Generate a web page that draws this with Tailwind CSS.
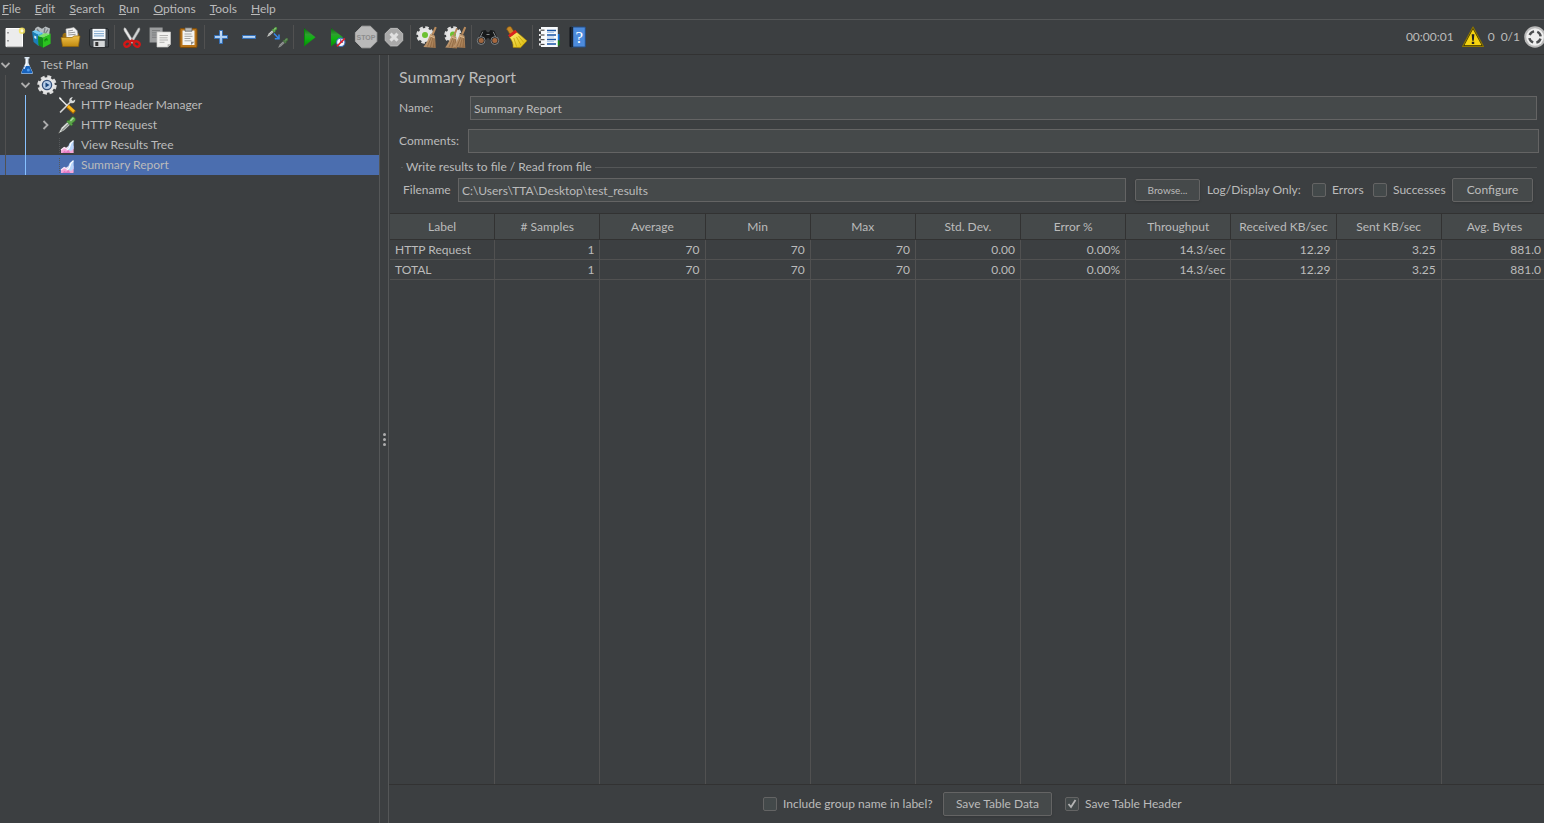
<!DOCTYPE html>
<html lang="en">
<head>
    <meta charset="UTF-8">
    <meta name="viewport" content="width=device-width, initial-scale=1.0">
    <title>Summary Report - Test Plan</title>
    <script src="https://cdn.jsdelivr.net/npm/@tailwindcss/browser@4"></script>
</head>
<body class="flex h-screen flex-col overflow-hidden bg-[#3c3f41] font-['Lato','Open_Sans',sans-serif] text-[12px] leading-4 text-[#bbbbbb]">

    <!-- Shared shapes -->
    <svg class="h-0 w-0 shrink-0" aria-hidden="true">
        <defs>
            <linearGradient id="blue" x1="0" y1="0" x2="0" y2="1"><stop offset="0" stop-color="#d2e4f8"/><stop offset="1" stop-color="#8fbcec"/></linearGradient>
            <linearGradient id="green" x1="0" y1="0" x2="0" y2="1"><stop offset="0" stop-color="#0b6a0e"/><stop offset=".35" stop-color="#2f9e30"/><stop offset=".55" stop-color="#0fb512"/><stop offset="1" stop-color="#078a08"/></linearGradient>
            <linearGradient id="gold" x1="0" y1="0" x2="0" y2="1"><stop offset="0" stop-color="#f0c14a"/><stop offset="1" stop-color="#c08a10"/></linearGradient>
            <linearGradient id="straw" x1="0" y1="0" x2="1" y2="1"><stop offset="0" stop-color="#d9b48a"/><stop offset="1" stop-color="#9a7048"/></linearGradient>
            <linearGradient id="yellow" x1="0" y1="0" x2="1" y2="1"><stop offset="0" stop-color="#fff27a"/><stop offset="1" stop-color="#d9b400"/></linearGradient>
            <symbol id="gear" viewBox="0 0 20 20">
                <circle cx="10" cy="10" r="8.3" fill="none" stroke="#dedede" stroke-width="2.8" stroke-dasharray="3.9 2.62"/>
                <circle cx="10" cy="10" r="7.8" fill="#e6e6e6"/>
            </symbol>
            <symbol id="broom" viewBox="0 0 14 22">
                <path d="M12.8 .5 9.6 8" stroke="#b88a5c" stroke-width="2"/>
                <path d="M7.5 7.2 12 9.2 12.8 21.5 .4 20.4C3.2 17 5.6 12 7.5 7.2z" fill="url(#straw)"/>
                <path d="M8.6 10 4.4 20M10 10.5 7.4 20.6M11.2 11 10.5 21" stroke="#86603a" stroke-width=".7"/>
                <path d="M7 9.4 11.8 11.4" stroke="#e0bd92" stroke-width="1"/>
            </symbol>
            <symbol id="dropper" viewBox="0 0 20 20">
                <path d="M1.2 18.8 4.4 12.6 10.6 6.8 13.4 9.4 7 15.6z" fill="#dfe3df" stroke="#3a3c3a" stroke-width=".6"/>
                <path d="M4.6 15.8 11.8 8.8" stroke="#8e938e" stroke-width="1.3"/>
                <path d="M9.6 6.4 11 5 12 5.7 14.4 2.6C16.2.2 20 3.6 18 6L15 8.4l.9 1-1.6 1.6z" fill="#5aa548" stroke="#2f6a25" stroke-width=".6"/>
                <path d="m13.4 6 3-3.2" stroke="#a8d69a" stroke-width="1.6"/>
            </symbol>
            <symbol id="chart" viewBox="0 0 20 20">
                <path d="M2.5 3v14.5H18" fill="none" stroke="#56595b" stroke-dasharray="1 1"/>
                <path d="M4 18V14.8l3.4-2.3 2 .8 2.4-2.2 4.8-.4V18z" fill="#f3a6d8"/>
                <path d="M4 15 7.2 12.6l2.2 1 2.4-2.2" fill="none" stroke="#fbe6f5" stroke-width="1.3"/>
                <path d="M10 14.2 12.6 8 16.6 5.2v8.6L14 16z" fill="#b7d4fa"/>
                <path d="M9.6 14.6c3.2.4 2.9-3.4 4.2-6.2l2.6-2.8" fill="none" stroke="#fff" stroke-width="1.2"/>
                <path d="m5.5 18 2-2.2 1.5 1.3 2.4-2 2 2.9" fill="#e27ac2"/>
            </symbol>
        </defs>
    </svg>

    <!-- Menu bar -->
    <nav class="flex h-5 shrink-0 items-center gap-3.5 border-b border-[#555758] px-0.5 pb-px">
        <a href="#"><u>F</u>ile</a>
        <a href="#"><u>E</u>dit</a>
        <a href="#"><u>S</u>earch</a>
        <a href="#"><u>R</u>un</a>
        <a href="#"><u>O</u>ptions</a>
        <a href="#"><u>T</u>ools</a>
        <a href="#"><u>H</u>elp</a>
    </nav>

    <!-- Toolbar -->
    <header class="flex h-[35px] shrink-0 items-center border-b border-[#323232]">
        <button class="grid h-7 w-7 place-items-center" aria-label="New">
            <svg class="size-6" viewBox="0 0 24 24"><path d="M4 3.5h16.5v18H4z" fill="#ececec" stroke="#fff"/><path d="M4.5 21.8h16" stroke="#a5a5a5"/><path d="M6 7v1.4M6 15v1.4" stroke="#777" stroke-width="1.4"/><circle cx="20" cy="5.8" r="3.2" fill="#f5e45c" opacity=".85"/><circle cx="20" cy="5.8" r="1.5" fill="#fffce0"/></svg>
        </button>
        <button class="grid h-7 w-7 place-items-center" aria-label="Templates">
            <svg class="size-6" viewBox="0 0 24 24"><path d="m4 7 1.5-4L8 1.6l4 2.2 3.5-2.2L20 3.5 19 10l-8 3-5-3z" fill="#b7bdc0"/><path d="m7 4 3 4M15 3l-1 5M18 4.5 15 9" stroke="#777f83" stroke-width="1.3"/><path d="m2 6.5 6.5 3v11.5L3.6 17z" fill="#1a7fb8"/><path d="m8.5 9.5 4-2v11l-4 2z" fill="#39aee8"/><path d="m2 6.5 3-1.2L12 7.5l-3.5 2z" fill="#70cbf4"/><path d="m4.3 10.5 2 1v2.6l-2-1.2z" fill="#d8effa"/><path d="m8 11 5 1.5v10.3L8.4 20z" fill="#138a1a"/><path d="m13 12.5 7.6-3.7v10L13 22.8z" fill="#2bc420"/><path d="m8 11 6.6-2.8 6 .6L13 12.5z" fill="#7de36a"/><path d="M15 16.5v-2l2-.8v2" fill="none" stroke="#0b6f10"/></svg>
        </button>
        <button class="grid h-7 w-7 place-items-center" aria-label="Open">
            <svg class="size-6" viewBox="0 0 24 24"><path d="M4.5 10 6 8h3l11.8.5V18L5 21z" fill="#9b6e10"/><path d="m8 4 8-1.4 3.2 3.2.8 7H8.6z" fill="#f5f5f5" stroke="#bbb" stroke-width=".6"/><path d="m10 6 5-.8M10 8l7.2-.8M10.2 10l7.5-.7" stroke="#999"/><path d="M3 12.5h11l2-1.6h6L20.4 21.5H4.6z" fill="url(#gold)" stroke="#98690a" stroke-width=".7"/></svg>
        </button>
        <button class="grid h-7 w-7 place-items-center" aria-label="Save">
            <svg class="size-6" viewBox="0 0 24 24"><path d="M5 3.5h16.5l1 1.5v17H4.6L3.5 20V4.5z" fill="#444a4f" stroke="#23272a"/><path d="M6.5 3.8h13V14h-13z" fill="#f7fafc"/><path d="M8 6.3h10M8 8.6h10M8 10.9h10" stroke="#8ab0d2" stroke-width="1.1"/><path d="M7.5 15.8h11.3V22H7.5z" fill="#d4d7d9"/><path d="M9.3 17h3v4h-3z" fill="#333"/></svg>
        </button>
        <div class="mx-0.5 h-6 w-px bg-[#515151]"></div>
        <button class="ml-px grid h-7 w-7 place-items-center" aria-label="Cut">
            <svg class="size-6" viewBox="0 0 24 24"><path d="M4 3.2c1-1 2 .3 2.6 1.6L14 17l-2 1.4L5.2 7.5C4.3 6 3.4 4.5 4 3.2z" fill="#e8e8e8" stroke="#999" stroke-width=".5"/><path d="M19.8 3.2c-1-1-2 .3-2.6 1.6L10 17l2 1.4 6.6-10.9c.9-1.5 1.8-3 1.2-4.3z" fill="#d0d3d4" stroke="#888" stroke-width=".5"/><g fill="none" stroke="#d31717" stroke-width="2.3"><ellipse cx="7.2" cy="19" rx="3" ry="2.4" transform="rotate(-35 7.2 19)"/><ellipse cx="16.8" cy="19" rx="3" ry="2.4" transform="rotate(35 16.8 19)"/><path d="m9.4 16.8 2.6-1.2 2.7 1.2"/></g></svg>
        </button>
        <button class="grid h-7 w-7 place-items-center" aria-label="Copy">
            <svg class="size-6" viewBox="0 0 24 24"><path d="M1.6 2.5h13v15h-13z" fill="#9b9d9e"/><path d="M4 5.5h8M4 7.8h8M4 10h5M4 12.3h5" stroke="#7d7f80"/><path d="M9 7h13.5v12.4L19.8 22H9z" fill="#f1f1ef" stroke="#c9c9c7" stroke-width=".7"/><path d="M11.5 10.5h8.5M11.5 12.8h8M11.5 15h8.5M11.5 17.3h5" stroke="#b2b2b0"/><path d="M19.6 22v-2.7h2.9z" fill="#a7a7a4"/></svg>
        </button>
        <button class="grid h-7 w-7 place-items-center" aria-label="Paste">
            <svg class="size-6" viewBox="0 0 24 24"><rect x="4" y="3.5" width="17" height="19" rx="1.3" fill="#b8741a" stroke="#7d4b08"/><path d="M6.5 5.5h12V20h-12z" fill="#f4f4f2"/><path d="M9 2.8h7v3.4H9z" fill="#b7b9b8" stroke="#555" stroke-width=".7"/><path d="M8.5 9h7M8.5 11.3h8M8.5 13.5h6M8.5 15.8h7" stroke="#a4a4a2"/><path d="M15 20v-3.3h3.5z" fill="#8d8d8b"/></svg>
        </button>
        <div class="mx-0.5 h-6 w-px bg-[#515151]"></div>
        <button class="grid h-7 w-7 place-items-center" aria-label="Expand all">
            <svg class="size-6" viewBox="0 0 24 24"><path d="M10.5 5.5h3v5h5v3h-5v5h-3v-5h-5v-3h5z" fill="url(#blue)" stroke="#3470b8"/></svg>
        </button>
        <button class="grid h-7 w-7 place-items-center" aria-label="Collapse all">
            <svg class="size-6" viewBox="0 0 24 24"><path d="M5.5 10.5h13v3h-13z" fill="url(#blue)" stroke="#3470b8"/></svg>
        </button>
        <button class="grid h-7 w-7 place-items-center" aria-label="Toggle">
            <svg class="size-6" viewBox="0 0 24 24"><use href="#dropper" x="1" y="1" width="12" height="12"/><g opacity=".6"><use href="#dropper" x="12" y="12" width="12" height="12"/></g><path d="m9 8.5 4.5 4.8M14 9.5v4.3H9.8" fill="none" stroke="#3688e8" stroke-width="1.5"/></svg>
        </button>
        <div class="mx-0.5 h-6 w-px bg-[#515151]"></div>
        <button class="grid h-7 w-7 place-items-center" aria-label="Start">
            <svg class="size-6" viewBox="0 0 24 24"><path d="M6 3 17.5 12.2 6 21.5z" fill="url(#green)"/><path d="M6.5 4.5v16" stroke="#0a8a0c"/></svg>
        </button>
        <button class="grid h-7 w-7 place-items-center" aria-label="Start no pauses">
            <svg class="size-6" viewBox="0 0 24 24"><path d="M5 3 17 12.2 5 21.5z" fill="url(#green)"/><circle cx="14.8" cy="17.3" r="4.2" fill="#f5f5ff" stroke="#3c72b8" stroke-width="1.1"/><path d="m14.8 14.2v3h2.2" fill="none" stroke="#3b3b90"/><path d="m10.9 21.4 8-8" stroke="#e0202a" stroke-width="1.5"/></svg>
        </button>
        <button class="grid h-7 w-7 place-items-center" aria-label="Stop">
            <svg class="size-6" viewBox="0 0 24 24"><path d="M7.8 1.2h8.6l6.4 6.4v8.8l-6.4 6.4H7.8l-6.4-6.4V7.6z" fill="#b9b9b9" stroke="#a9a9a9"/><text x="12" y="14.8" text-anchor="middle" font-family="Liberation Sans" font-size="7" font-weight="bold" fill="#8c8c8c">STOP</text></svg>
        </button>
        <button class="grid h-7 w-7 place-items-center" aria-label="Shutdown">
            <svg class="size-6" viewBox="0 0 24 24"><path d="M8.5 3.4h7l5.2 5.2v7L15.5 20.9h-7l-5.3-5.3v-7z" fill="#a9a9a9" stroke="#bcbcbc"/><path d="m8.5 8.6 7 7m0-7-7 7" stroke="#e0e0e0" stroke-width="3"/></svg>
        </button>
        <div class="mx-0.5 h-6 w-px bg-[#515151]"></div>
        <button class="grid h-7 w-7 place-items-center" aria-label="Clear">
            <svg class="size-6" viewBox="0 0 24 24"><use href="#gear" x="1" y="1" width="18" height="18"/><circle cx="10" cy="10" r="3" fill="#6cc132"/><use href="#broom" x="8" y="1.5" width="14" height="22"/></svg>
        </button>
        <button class="grid h-7 w-7 place-items-center" aria-label="Clear all">
            <svg class="size-6" viewBox="0 0 24 24"><use href="#gear" x="1" y="1" width="18" height="18"/><circle cx="10" cy="9.5" r="3" fill="#6cc132"/><use href="#broom" x="1.5" y="3" width="14" height="21"/><use href="#broom" x="9.5" y="1.5" width="14" height="22"/></svg>
        </button>
        <div class="mx-0.5 h-6 w-px bg-[#515151]"></div>
        <button class="grid h-7 w-7 place-items-center" aria-label="Search">
            <svg class="size-6" viewBox="0 0 24 24"><path d="M5.7 5.8 9.5 4.9l1.6 2.4h1.8l1.6-2.4 3.8.9 4.4 9.7-7 3.8-2.6-6h-2.2l-2.6 6-7-3.8z" fill="#17191a"/><circle cx="5.2" cy="15.6" r="3.9" fill="#2a2c2d" stroke="#808487"/><circle cx="18.8" cy="15.6" r="3.9" fill="#2a2c2d" stroke="#808487"/><circle cx="5.2" cy="15.6" r="2.5" fill="#a0663f"/><circle cx="18.8" cy="15.6" r="2.5" fill="#a8683e"/><path d="m6.8 6.8-2.5 5M17.2 6.8l2.5 5M10.5 9.5h3" stroke="#85898b"/></svg>
        </button>
        <button class="grid h-7 w-7 place-items-center" aria-label="Reset search">
            <svg class="size-6" viewBox="0 0 24 24"><path d="M2.8 4.2c0-2.2 3.4-3.6 4.6-1.8L10.2 7 6 9.4z" fill="#c68a28" stroke="#83510b" stroke-width=".7"/><path d="m5.5 12.2 7-5.2 4 3.2 6.5 5.6-6.5 7-7.500-.4c.5-3.400-.9-6.900-3.500-10.200z" fill="url(#yellow)" stroke="#a27e00" stroke-width=".6"/><path d="m5 11.4 7.2-5.4" stroke="#da231e" stroke-width="3"/><path d="m9.8 13 2.8 8.5M12.5 12l4.3 8M14.5 11l5.3 6.5" stroke="#c4a306" stroke-width=".8"/></svg>
        </button>
        <div class="mx-0.5 h-6 w-px bg-[#515151]"></div>
        <button class="grid h-7 w-7 place-items-center" aria-label="Function helper">
            <svg class="size-6" viewBox="0 0 24 24"><path d="M19 9h3.5v6.5H19z" fill="#1b78da"/><path d="M19 15.5h3.5v5H19z" fill="#178b18"/><path d="M4 2h16.8v20H4z" fill="#f8fafc"/><path d="M10 5.5h9M10 10h9M10 14.5h9M10 19h9" stroke="#1653a4" stroke-width="1.4"/><path d="M10 7.5h7M10 12h7M10 16.6h7" stroke="#aac7ea"/><path d="M2 5.2h5M2 10h5M2 14.7h5M2 19.4h5" stroke="#f2f2f2" stroke-width="2.2"/><path d="M3.5 5.2h4M3.5 10h4M3.5 14.7h4M3.5 19.4h4" stroke="#333"/></svg>
        </button>
        <button class="grid h-7 w-7 place-items-center" aria-label="Help">
            <svg class="size-6" viewBox="0 0 24 24"><path d="m4.5 2.4 2-1V22.4l-2-1z" fill="#11151b"/><path d="M6.5 2h13.8v20H6.5z" fill="#4c8bdc" stroke="#244e85"/><path d="M6 2h2.2v20H6z" fill="#1d2733"/><text x="14.3" y="18" text-anchor="middle" font-family="Liberation Serif" font-size="17" fill="#fff">?</text></svg>
        </button>
        <div class="-mr-0.5 ml-auto flex items-center">
            <span>00:00:01</span>
            <button class="ml-2" aria-label="Warnings">
                <svg class="size-[22px]" viewBox="0 0 20 20"><path d="M10 1 19.5 18.6H.5z" fill="#2c2800" stroke="#8e7600" stroke-linejoin="round"/><path d="M10 3 17.8 17.6H2.2z" fill="#f6d410"/><path d="M8.8 7.5h2.4l-.5 6H9.3zM8.9 14.4h2.2v2H8.9z" fill="#222"/></svg>
            </button>
            <span class="ml-1">0</span>
            <span class="ml-1.5">0/1</span>
            <svg class="ml-1 size-[22px]" viewBox="0 0 20 20"><circle cx="10" cy="10" r="9.8" fill="#b9b9b9"/><circle cx="10" cy="10" r="8" fill="#eee"/><circle cx="10" cy="10" r="5.2" fill="none" stroke="#4b4d4f" stroke-width="2.2" stroke-dasharray="5.17 3" stroke-dashoffset="-1.5"/></svg>
        </div>
    </header>

    <main class="flex min-h-0 flex-1">
        <!-- Test plan tree -->
        <aside class="w-[379px] shrink-0">
            <ul role="tree">
                <li class="flex h-5 items-center">
                    <svg class="size-2.5" viewBox="0 0 10 10"><path d="m1.5 3 4 4 4-4" fill="none" stroke="#adadad" stroke-width="1.8"/></svg>
                    <svg class="ml-[7px] size-5" viewBox="0 0 20 20"><path d="M7.5 2h5v1.5h-1V8l4.2 9.2c.3 1-.2 1.8-1.2 1.8h-9c-1 0-1.5-.8-1.2-1.8L8.5 8V3.5h-1z" fill="#d9e6f1"/><path d="M7.4 11h5.2l2.8 6.3c.2.7-.1 1.1-.8 1.1H5.4c-.7 0-1-.4-.8-1.1z" fill="#1763bd"/><path d="M9.3 4v5L7 14" fill="none" stroke="#fff"/><circle cx="11.3" cy="15" r="1.5" fill="#4f9cf0"/></svg>
                    <span class="ml-1">Test Plan</span>
                </li>
                <li class="flex h-5 items-center">
                    <span class="ml-[5px] h-full w-px bg-[#515151]"></span>
                    <svg class="ml-3.5 size-2.5" viewBox="0 0 10 10"><path d="m1.5 3 4 4 4-4" fill="none" stroke="#adadad" stroke-width="1.8"/></svg>
                    <svg class="ml-[7px] size-5" viewBox="0 0 20 20"><use href="#gear" width="20" height="20"/><circle cx="10" cy="10" r="4.6" fill="#b7cde8" stroke="#33507c" stroke-width="1.3"/><path d="m8.5 7.5 4 2.5-4 2.5z" fill="#19467f"/></svg>
                    <span class="ml-1">Thread Group</span>
                </li>
                <li class="flex h-5 items-center">
                    <span class="ml-[5px] h-full w-px bg-[#515151]"></span>
                    <span class="ml-[19px] h-full w-px bg-[#87c1ff]"></span>
                    <svg class="ml-[31px] size-5" viewBox="0 0 20 20"><path d="m3 17.5 11-11" stroke="#222" stroke-width="3"/><path d="m3 17.5 11-11" stroke="#c6c8c8" stroke-width="1.8"/><path d="M12.5 6.8c-1-2.5.8-5 3.4-4.6L14.3 4.4l1.5 1.5 2.4-1.4c.3 2.7-2 4.5-4.5 3.5z" fill="#d8dada"/><path d="m2.5 3 8 8" stroke="#e5e5e5" stroke-width="1.6"/><path d="m2 1.8 2.6 1.7-1.3 1.3z" fill="#fff"/><path d="m10.5 11 7 6.5" stroke="#ab6900" stroke-width="4"/><path d="m11 11 6 5.5" stroke="#f8b71c" stroke-width="2.6"/></svg>
                    <span class="ml-1">HTTP Header Manager</span>
                </li>
                <li class="flex h-5 items-center">
                    <span class="ml-[5px] h-full w-px bg-[#515151]"></span>
                    <span class="ml-[19px] h-full w-px bg-[#87c1ff]"></span>
                    <svg class="ml-3.5 size-2.5" viewBox="0 0 10 10"><path d="m3.5 1 4 4-4 4" fill="none" stroke="#adadad" stroke-width="1.8"/></svg>
                    <svg class="ml-[7px] size-5"><use href="#dropper" width="20" height="20"/></svg>
                    <span class="ml-1">HTTP Request</span>
                </li>
                <li class="flex h-5 items-center">
                    <span class="ml-[5px] h-full w-px bg-[#515151]"></span>
                    <span class="ml-[19px] h-full w-px bg-[#87c1ff]"></span>
                    <svg class="ml-[31px] size-5"><use href="#chart" width="20" height="20"/></svg>
                    <span class="ml-1">View Results Tree</span>
                </li>
                <li class="flex h-5 items-center bg-[#4b6eaf]" aria-selected="true">
                    <span class="ml-[5px] h-full w-px bg-[#515151]"></span>
                    <span class="ml-[19px] h-full w-px bg-[#87c1ff]"></span>
                    <svg class="ml-[31px] size-5"><use href="#chart" width="20" height="20"/></svg>
                    <span class="ml-1">Summary Report</span>
                </li>
            </ul>
        </aside>

        <!-- Split pane divider -->
        <div class="flex w-2.5 shrink-0 flex-col items-center justify-center gap-0.5 border-x border-[#555758]">
            <span class="size-[3px] rounded-full bg-[#adadad]"></span>
            <span class="size-[3px] rounded-full bg-[#adadad]"></span>
            <span class="size-[3px] rounded-full bg-[#adadad]"></span>
        </div>

        <section class="flex min-w-0 flex-1 flex-col">
            <form class="shrink-0 pl-2.5">
                <h1 class="pt-3 text-[16px] leading-5">Summary Report</h1>
                <div class="mt-[9px] flex items-center pr-[7px]">
                    <label for="name" class="w-[71px]">Name:</label>
                    <input id="name" type="text" value="Summary Report" class="h-6 min-w-0 flex-1 border border-[#646464] bg-[#45494a] px-[3px]">
                </div>
                <div class="mt-[9px] flex items-center pr-[5px]">
                    <label for="comments" class="w-[69px]">Comments:</label>
                    <input id="comments" type="text" class="h-6 min-w-0 flex-1 border border-[#646464] bg-[#45494a] px-[3px]">
                </div>
                <fieldset class="mr-[7px]">
                    <div class="flex items-center gap-[3px] pt-1.5">
                        <span class="ml-0.5 h-px w-0.5 bg-[#555758]"></span>
                        <span>Write results to file / Read from file</span>
                        <span class="h-px flex-1 bg-[#555758]"></span>
                    </div>
                    <div class="flex items-center pt-[3px]">
                        <label for="filename" class="ml-1 w-[55px]">Filename</label>
                        <input id="filename" type="text" value="C:\Users\TTA\Desktop\test_results" class="h-6 min-w-0 flex-1 border border-[#646464] bg-[#45494a] px-[3px]">
                        <button type="button" class="ml-[9px] h-[22px] w-[65px] rounded-xs border border-[#646464] bg-[#45494a] text-[10px] leading-3 shadow-sm">Browse...</button>
                        <span class="ml-[7px] w-[105px] whitespace-nowrap">Log/Display Only:</span>
                        <label class="flex w-[61px] items-center gap-1.5"><input type="checkbox" class="size-3.5 appearance-none rounded-xs border border-[#646464] bg-[#43494a]">Errors</label>
                        <label class="flex w-[79px] items-center gap-1.5"><input type="checkbox" class="size-3.5 appearance-none rounded-xs border border-[#646464] bg-[#43494a]">Successes</label>
                        <button type="button" class="mr-1 h-6 w-[81px] rounded-xs border border-[#646464] bg-[#45494a] shadow-sm">Configure</button>
                    </div>
                </fieldset>
            </form>

            <!-- Results table; the last row carries the column lines down to the footer -->
            <div class="mt-[11px] min-h-0 flex-1 overflow-hidden border-b border-[#323232] pl-px">
                <table class="h-full w-[calc(100%+3px)] table-fixed border-separate border-spacing-0">
                    <thead class="bg-[#45494a]">
                        <tr class="h-[27px]">
                            <th class="border-y border-r border-[#323232] p-0 font-normal">Label</th>
                            <th class="border-y border-r border-[#323232] p-0 font-normal"># Samples</th>
                            <th class="border-y border-r border-[#323232] p-0 font-normal">Average</th>
                            <th class="border-y border-r border-[#323232] p-0 font-normal">Min</th>
                            <th class="border-y border-r border-[#323232] p-0 font-normal">Max</th>
                            <th class="border-y border-r border-[#323232] p-0 font-normal">Std. Dev.</th>
                            <th class="border-y border-r border-[#323232] p-0 font-normal">Error %</th>
                            <th class="border-y border-r border-[#323232] p-0 font-normal">Throughput</th>
                            <th class="border-y border-r border-[#323232] p-0 font-normal">Received KB/sec</th>
                            <th class="border-y border-r border-[#323232] p-0 font-normal">Sent KB/sec</th>
                            <th class="border-y border-[#323232] p-0 font-normal">Avg. Bytes</th>
                        </tr>
                    </thead>
                    <tbody class="text-right [&_td]:border-r [&_td]:border-[#515151] [&_td]:px-[5px] [&_td]:py-0">
                        <tr class="h-5 [&_td]:border-b">
                            <td class="text-left">HTTP Request</td><td>1</td><td>70</td><td>70</td><td>70</td><td>0.00</td><td>0.00%</td><td>14.3/sec</td><td>12.29</td><td>3.25</td><td>881.0</td>
                        </tr>
                        <tr class="h-5 [&_td]:border-b">
                            <td class="text-left">TOTAL</td><td>1</td><td>70</td><td>70</td><td>70</td><td>0.00</td><td>0.00%</td><td>14.3/sec</td><td>12.29</td><td>3.25</td><td>881.0</td>
                        </tr>
                        <tr>
                            <td></td><td></td><td></td><td></td><td></td><td></td><td></td><td></td><td></td><td></td><td></td>
                        </tr>
                    </tbody>
                </table>
            </div>

            <footer class="flex h-[38px] shrink-0 items-center justify-center pl-3">
                <label class="flex w-[180px] items-center gap-1.5 whitespace-nowrap"><input type="checkbox" class="size-3.5 appearance-none rounded-xs border border-[#646464] bg-[#43494a]">Include group name in label?</label>
                <button type="button" class="h-6 w-[109px] rounded-xs border border-[#646464] bg-[#45494a] shadow-sm">Save Table Data</button>
                <label class="ml-[13px] flex w-[117px] items-center gap-1.5 whitespace-nowrap">
                    <span class="grid size-3.5">
                        <input type="checkbox" checked class="col-start-1 row-start-1 size-3.5 appearance-none rounded-xs border border-[#646464] bg-[#43494a]">
                        <svg class="pointer-events-none col-start-1 row-start-1 size-3.5" viewBox="0 0 14 14"><path d="m3.5 7 2.5 3 4.5-7" fill="none" stroke="#b4b4b4" stroke-width="1.8"/></svg>
                    </span>
                    Save Table Header
                </label>
            </footer>
        </section>
    </main>
</body>
</html>
